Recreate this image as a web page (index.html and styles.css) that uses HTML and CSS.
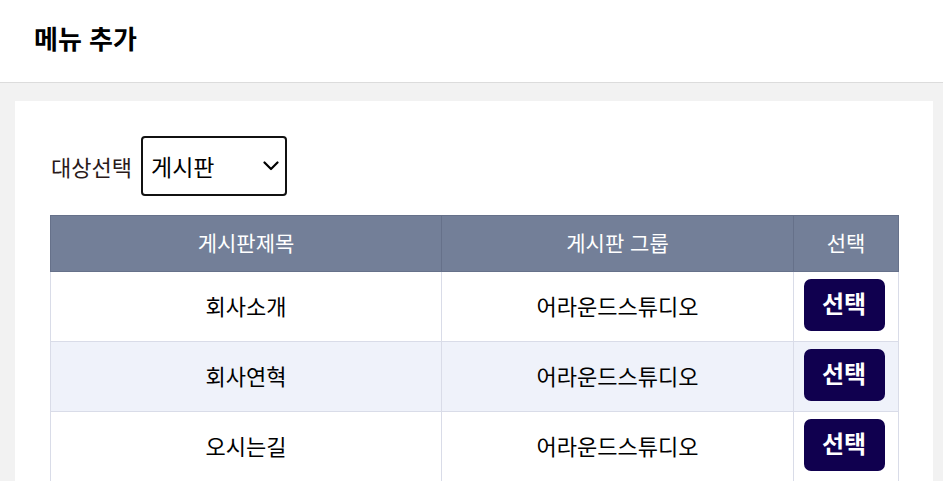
FILE: index.html
```html
<!DOCTYPE html>
<html lang="ko">
<head>
<meta charset="utf-8">
<title>메뉴 추가</title>
<link rel="stylesheet" href="styles.css">
</head>
<body>
<header class="page-header">
  <h1 class="page-title">메뉴 추가</h1>
</header>
<main class="page-body">
  <section class="card">
    <div class="filter-row">
      <label class="filter-label" for="target">대상선택</label>
      <div class="select-wrap">
        <select id="target" class="select">
          <option>게시판</option>
        </select>
        <svg class="chevron" width="16" height="10" viewBox="0 0 16 10"><path d="M1.5 1.5 L8 8 L14.5 1.5" fill="none" stroke="#000" stroke-width="2.2" stroke-linecap="round" stroke-linejoin="round"/></svg>
      </div>
    </div>
    <table class="board-table">
      <colgroup>
        <col class="col-title">
        <col class="col-group">
        <col class="col-select">
      </colgroup>
      <thead>
        <tr><th>게시판제목</th><th>게시판 그룹</th><th>선택</th></tr>
      </thead>
      <tbody>
        <tr><td>회사소개</td><td>어라운드스튜디오</td><td><button class="pick-btn">선택</button></td></tr>
        <tr><td>회사연혁</td><td>어라운드스튜디오</td><td><button class="pick-btn">선택</button></td></tr>
        <tr><td>오시는길</td><td>어라운드스튜디오</td><td><button class="pick-btn">선택</button></td></tr>
      </tbody>
    </table>
  </section>
</main>
</body>
</html>
```
FILE: styles.css
```css
* { box-sizing: border-box; }
html, body { margin: 0; padding: 0; }
body {
  font-family: "Noto Sans CJK KR", "Noto Sans", sans-serif;
  background: #f2f2f2;
  color: #000;
  height: 481px;
  overflow: hidden;
}
.page-header {
  height: 83px;
  background: #fff;
  border-bottom: 1px solid #dcdcdc;
  display: flex;
  align-items: center;
  padding-left: 34px;
}
.page-title {
  margin: 0;
  font-size: 26px;
  font-weight: 700;
  line-height: 1;
  padding-bottom: 6px;
}
.page-body {
  padding: 18px 10px 0 15px;
}
.card {
  background: #fff;
  padding: 35px 35px 0 35px;
}
.filter-row {
  display: flex;
  align-items: center;
  gap: 9px;
  margin-left: 1px;
}
.filter-label {
  font-size: 22px;
  color: #2a1a1a;
  padding-top: 0;
}
.select-wrap {
  position: relative;
  width: 146px;
  height: 60px;
}
.select {
  appearance: none;
  -webkit-appearance: none;
  width: 100%;
  height: 100%;
  border: 2px solid #111;
  border-radius: 4px;
  background: #fff;
  font-family: inherit;
  font-size: 23px;
  color: #000;
  padding: 0 0 1px 8px;
  margin: 0;
}
.chevron {
  position: absolute;
  right: 8px;
  top: 25px;
  pointer-events: none;
}
.board-table {
  width: 848px;
  margin-top: 19px;
  border-collapse: collapse;
  table-layout: fixed;
}
.col-title { width: 391px; }
.col-group { width: 352px; }
.col-select { width: 105px; }
.board-table th {
  height: 56px;
  background: #737f98;
  color: #fff;
  font-weight: 400;
  font-size: 21px;
  border: 1px solid #66718a;
  padding: 0 0 4px;
}
.board-table td {
  height: 70px;
  text-align: center;
  font-size: 22px;
  border: 1px solid #d9dce8;
  padding: 0 0 4px;
}
.board-table tbody tr:nth-child(even) td {
  background: #eff2fa;
}
.pick-btn {
  width: 81px;
  height: 52px;
  border: none;
  border-radius: 7px;
  background: #10004f;
  color: #fff;
  font-family: inherit;
  font-size: 24px;
  font-weight: 700;
  padding: 0 0 4px;
  margin: 0 4px 0 0;
  cursor: pointer;
}
```
